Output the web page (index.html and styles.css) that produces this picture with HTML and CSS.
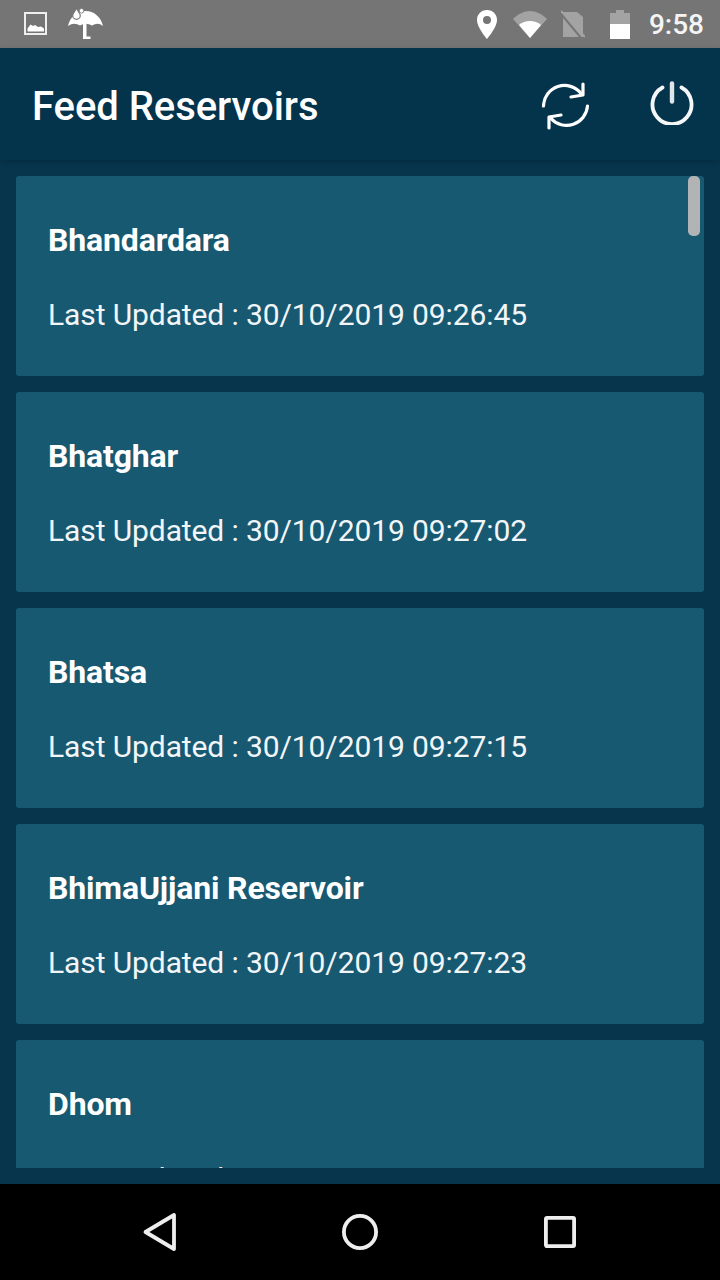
FILE: index.html
```html
<!DOCTYPE html>
<html lang="en">
<head>
<meta charset="utf-8">
<title>Feed Reservoirs</title>
<link rel="stylesheet" href="styles.css">
</head>
<body>
<div class="screen">
  <header class="status">
    <div class="status-left">
      <svg class="ic-image" viewBox="0 0 24 24"><rect x="1" y="1" width="21" height="21" fill="none" stroke="#eee" stroke-width="2"/><path d="M3.500 19.500v-3l3-4 2.500 1.500 2-1 3 2 3-.5 3 2v3z" fill="#fff"/></svg>
      <svg class="ic-umbrella" viewBox="0 0 36 32">
        <path d="M0 18C2 9 9 3 17.500 3S33 9 35 18q-5-4-11-.5-6-3.500-12 0Q6 14 0 18z" fill="#fff"/>
        <path d="M15 14h3.500v14.500h4V31H15z" fill="#fff"/>
        <path d="M8.500 .5c2 3 3.800 5 3.800 7a3.800 3.800 0 0 1-7.600 0c0-2 1.800-4 3.800-7z" fill="#fff" stroke="#757575" stroke-width="1.200"/>
        <circle cx="13.500" cy="2.800" r="2.300" fill="#fff" stroke="#757575" stroke-width=".8"/>
      </svg>
    </div>
    <div class="status-right">
      <svg class="ic-pin" viewBox="0 0 20 29"><path fill-rule="evenodd" d="M10 0C4 0 0 4.500 0 10c0 7.500 10 19 10 19s10-11.500 10-19C20 4.500 16 0 10 0zm0 14a4 4 0 1 1 0-8 4 4 0 0 1 0 8z" fill="#fff"/></svg>
      <svg class="ic-wifi" viewBox="0 0 34 27"><path d="M0 8C5 3 11 0 17 0s12 3 17 8L17 27z" fill="#a3a3a3"/><path d="M6 14c3-2.500 7-4 11-4s8 1.500 11 4L17 27z" fill="#fff"/></svg>
      <svg class="ic-sim" viewBox="0 0 24 28"><path d="M2 2h14l6 5v20H2z" fill="#a3a3a3"/><path d="M0 1l24 26" stroke="#a3a3a3" stroke-width="2"/><path d="M0 4l20 24" stroke="#757575" stroke-width="2"/></svg>
      <svg class="ic-battery" viewBox="0 0 20 29"><path d="M6 0h8v3h6v26H0V3h6z" fill="#a3a3a3"/><rect y="14" width="20" height="15" fill="#fff"/></svg>
      <span class="clock">9:58</span>
    </div>
  </header>

  <div class="appbar">
    <h1 class="appbar-title">Feed Reservoirs</h1>
    <div class="appbar-actions">
      <svg class="ic-refresh" viewBox="0 0 48 48" fill="none" stroke="#fff" stroke-width="3.200" stroke-linecap="round" stroke-linejoin="round">
        <path d="M1.500 24A21 21 0 0 1 39 11.500"/><path d="M41 2v11l-12 2"/>
        <path d="M45.500 24A21 21 0 0 1 9 36.500"/><path d="M7 46V35l12-2"/>
      </svg>
      <svg class="ic-power" viewBox="0 0 44 44" fill="none" stroke="#f4f6f7" stroke-width="3.800" stroke-linecap="round">
        <path d="M12.500 6.500a19.500 19.500 0 1 0 19 0"/><path d="M22 2.500v18" stroke-width="4.400" stroke="#dfe5e8"/>
      </svg>
    </div>
  </div>

  <main class="list-wrap">
    <div class="list">
      <article class="card"><h2 class="card-name">Bhandardara</h2><p class="card-meta">Last Updated : 30/10/2019 09:26:45</p></article>
      <article class="card"><h2 class="card-name">Bhatghar</h2><p class="card-meta">Last Updated : 30/10/2019 09:27:02</p></article>
      <article class="card"><h2 class="card-name">Bhatsa</h2><p class="card-meta">Last Updated : 30/10/2019 09:27:15</p></article>
      <article class="card"><h2 class="card-name">BhimaUjjani Reservoir</h2><p class="card-meta">Last Updated : 30/10/2019 09:27:23</p></article>
      <article class="card"><h2 class="card-name">Dhom</h2><p class="card-meta">Last Updated : 30/10/2019 09:27:31</p></article>
    </div>
    <div class="scroll-thumb"></div>
  </main>

  <nav class="navbar">
    <svg class="ic-nav" viewBox="0 0 40 40" fill="none" stroke="#eee" stroke-width="3.800" stroke-linejoin="round"><path d="M34 3v34L5.500 20z"/></svg>
    <svg class="ic-nav" viewBox="0 0 40 40" fill="none" stroke="#eee" stroke-width="3.800"><circle cx="20" cy="20" r="16.100"/></svg>
    <svg class="ic-nav" viewBox="0 0 40 40" fill="none" stroke="#eee" stroke-width="3.800" stroke-linejoin="round"><rect x="5.900" y="5.900" width="28.200" height="28.200" rx="1"/></svg>
  </nav>
</div>
</body>
</html>
```
FILE: styles.css
```css
* { box-sizing: border-box; }

html, body {
  margin: 0;
  padding: 0;
  background: #000;
}

.screen {
  width: 720px;
  height: 1280px;
  display: flex;
  flex-direction: column;
  overflow: hidden;
  font-family: Roboto, "Liberation Sans", sans-serif;
  color: #fff;
  background: #06354c;
}

/* status bar */
.status {
  height: 48px;
  flex: none;
  display: flex;
  justify-content: space-between;
  align-items: center;
  background: #757575;
  padding: 0 16px 0 24px;
}

.status-left, .status-right {
  display: flex;
  align-items: center;
}

.ic-image { width: 24px; height: 24px; }
.ic-umbrella { width: 36px; height: 32px; margin-left: 20px; margin-top: -1px; }
.ic-pin { width: 20px; height: 29px; }
.ic-wifi { width: 34px; height: 27px; margin-left: 16px; }
.ic-sim { width: 24px; height: 28px; margin-left: 14px; }
.ic-battery { width: 20px; height: 29px; margin-left: 25px; }

.clock {
  font-size: 28px;
  font-weight: 500;
  margin-left: 19px;
  color: #f4f4f4;
}

/* app bar */
.appbar {
  height: 112px;
  flex: none;
  display: flex;
  align-items: center;
  justify-content: space-between;
  background: #03344c;
  padding: 0 26px 0 32px;
  box-shadow: 0 2px 6px rgba(0, 0, 0, 0.18);
  position: relative;
  z-index: 1;
}

.appbar-title {
  margin: 6px 0 0;
  font-size: 40px;
  font-weight: 500;
  line-height: 1;
  letter-spacing: -0.05px;
}

.appbar-actions {
  display: flex;
  align-items: center;
  gap: 60px;
}

.ic-refresh { width: 48px; height: 48px; margin-top: 4px; }
.ic-power { width: 44px; height: 44px; margin-bottom: 2px; }

/* list */
.list-wrap {
  flex: 1;
  min-height: 0;
  margin: 16px;
  overflow: hidden;
  position: relative;
}

.list {
  display: flex;
  flex-direction: column;
  gap: 16px;
}

.card {
  height: 200px;
  flex: none;
  padding: 47px 32px 0;
  background: #185972;
  border-radius: 3px;
}

.card-name {
  margin: 0;
  font-size: 32px;
  font-weight: 700;
  line-height: 34px;
  letter-spacing: -0.15px;
}

.card-meta {
  margin: 41px 0 0;
  font-size: 30px;
  font-weight: 400;
  line-height: 34px;
  letter-spacing: -0.1px;
  color: #f2f6f8;
}

.scroll-thumb {
  position: absolute;
  top: 0;
  right: 4px;
  width: 12px;
  height: 60px;
  border-radius: 5px;
  background: #b2b3b4;
}

/* navigation bar */
.navbar {
  height: 96px;
  flex: none;
  display: flex;
  justify-content: space-between;
  align-items: center;
  background: #000;
  padding: 0 140px;
}

.ic-nav { width: 40px; height: 40px; }
```
